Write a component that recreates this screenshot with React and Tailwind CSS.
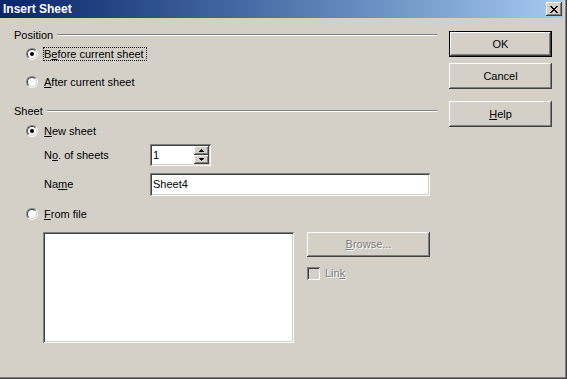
import React from "react";

const font = "font-['Liberation_Sans',Arial,sans-serif]";
const raised =
  "shadow-[inset_-1px_-1px_#404040,inset_1px_1px_#ffffff,inset_-2px_-2px_#808080,inset_2px_2px_#d4d0c8]";
const sunken =
  "shadow-[inset_1px_1px_#808080,inset_-1px_-1px_#ffffff,inset_2px_2px_#404040,inset_-2px_-2px_#d4d0c8]";

const Radio = ({ checked }) => (
  <div className="w-[12px] h-[12px] shrink-0 rounded-full border border-t-[#808080] border-l-[#808080] border-b-white border-r-white">
    <div className="w-full h-full rounded-full border border-t-[#404040] border-l-[#404040] border-b-[#d4d0c8] border-r-[#d4d0c8] bg-white flex items-center justify-center">
      {checked && <div className="w-[4px] h-[4px] rounded-full bg-black" />}
    </div>
  </div>
);

const Group = ({ label }) => (
  <div className="flex items-center h-[14px] gap-[4px]">
    <span>{label}</span>
    <div className="flex-1 h-[2px] border-t border-t-[#808080] border-b border-b-white" />
  </div>
);

const RadioRow = ({ checked, focus, className, children }) => (
  <div className={`flex items-center h-[16px] pl-[12px] gap-[5px] ${className}`}>
    <Radio checked={checked} />
    <span
      className={`leading-[12px] border pr-[2px] ${
        focus ? "border-dotted border-black" : "border-transparent"
      }`}
    >
      {children}
    </span>
  </div>
);

const Arrow = ({ down }) => (
  <svg width="5" height="3" viewBox="0 0 5 3" shapeRendering="crispEdges">
    <path d={down ? "M0 0H5L2.5 3Z" : "M2.5 0L5 3H0Z"} fill="#000" />
  </svg>
);

const CloseGlyph = () => (
  <svg width="8" height="7" viewBox="0 0 8 7" shapeRendering="crispEdges">
    <path
      fill="#000"
      d="M0 0h2v1H0zM6 0h2v1H6zM1 1h2v1H1zM5 1h2v1H5zM2 2h4v1H2zM3 3h2v1H3zM2 4h4v1H2zM1 5h2v1H1zM5 5h2v1H5zM0 6h2v1H0zM6 6h2v1H6z"
    />
  </svg>
);

const Button = ({ children, isDefault, className }) =>
  isDefault ? (
    <div className={`w-[103px] h-[26px] border border-black ${className}`}>
      <div className={`w-full h-full flex items-center justify-center bg-[#d4d0c8] ${raised}`}>
        {children}
      </div>
    </div>
  ) : (
    <div
      className={`w-[103px] h-[26px] flex items-center justify-center bg-[#d4d0c8] ${raised} ${className}`}
    >
      {children}
    </div>
  );

export default function App() {
  return (
    <div
      className={`w-[567px] h-[379px] bg-[#d4d0c8] text-[11px] text-black ${font} pr-[4px] pb-[4px] flex flex-col shadow-[inset_-1px_-1px_#404040,inset_-2px_-2px_#808080]`}
    >
      {/* title bar */}
      <div className="h-[18px] shrink-0 flex items-center justify-between bg-linear-to-r from-[#0a246a] to-[#a6caf0] pl-[3px] pr-[1px]">
        <span className="text-white font-bold text-[12px] leading-none">Insert Sheet</span>
        <div className={`w-[16px] h-[14px] flex items-center justify-center bg-[#d4d0c8] ${raised}`}>
          <CloseGlyph />
        </div>
      </div>

      <div className="flex flex-1">
        {/* left column */}
        <div className="w-[437px] pl-[14px] pt-[10px] flex flex-col">
          <Group label="Position" />
          <RadioRow checked focus className="mt-[4px]">
            B<u>e</u>fore current sheet
          </RadioRow>
          <RadioRow className="mt-[12px]">
            <u>A</u>fter current sheet
          </RadioRow>

          <div className="mt-[14px]">
            <Group label="Sheet" />
          </div>
          <RadioRow checked className="mt-[5px]">
            <u>N</u>ew sheet
          </RadioRow>

          <div className="flex items-center mt-[5px] ml-[30px] h-[22px]">
            <span className="w-[106px]">
              N<u>o</u>. of sheets
            </span>
            <div className={`w-[61px] h-[22px] bg-white ${sunken} flex items-center pl-[3px] pr-[2px]`}>
              <span className="flex-1">1</span>
              <div className="flex flex-col w-[15px] h-[18px]">
                <div className={`flex-1 bg-[#d4d0c8] ${raised} flex items-center justify-center`}>
                  <Arrow />
                </div>
                <div className={`flex-1 bg-[#d4d0c8] ${raised} flex items-center justify-center`}>
                  <Arrow down />
                </div>
              </div>
            </div>
          </div>

          <div className="flex items-center mt-[7px] ml-[30px] h-[23px]">
            <span className="w-[106px]">
              Na<u>m</u>e
            </span>
            <div className={`w-[280px] h-[23px] bg-white ${sunken} flex items-center pl-[3px]`}>
              Sheet4
            </div>
          </div>

          <RadioRow className="mt-[10px]">
            <u>F</u>rom file
          </RadioRow>

          <div className="flex mt-[10px] ml-[29px]">
            <div className={`w-[251px] h-[111px] bg-white ${sunken}`} />
            <div className="ml-[13px] flex flex-col">
              <div
                className={`w-[123px] h-[25px] ${raised} flex items-center justify-center text-[#808080] [text-shadow:1px_1px_#ffffff]`}
              >
                <span>
                  <u>B</u>rowse...
                </span>
              </div>
              <div className="mt-[10px] flex items-center gap-[5px] h-[13px]">
                <div className={`w-[13px] h-[13px] bg-[#d4d0c8] ${sunken}`} />
                <span className="text-[#808080] [text-shadow:1px_1px_#ffffff]">
                  Lin<u>k</u>
                </span>
              </div>
            </div>
          </div>
        </div>

        {/* right column */}
        <div className="ml-[12px] pt-[13px] flex flex-col">
          <Button isDefault>OK</Button>
          <Button className="mt-[6px]">Cancel</Button>
          <Button className="mt-[12px]">
            <span>
              <u>H</u>elp
            </span>
          </Button>
        </div>
      </div>
    </div>
  );
}
